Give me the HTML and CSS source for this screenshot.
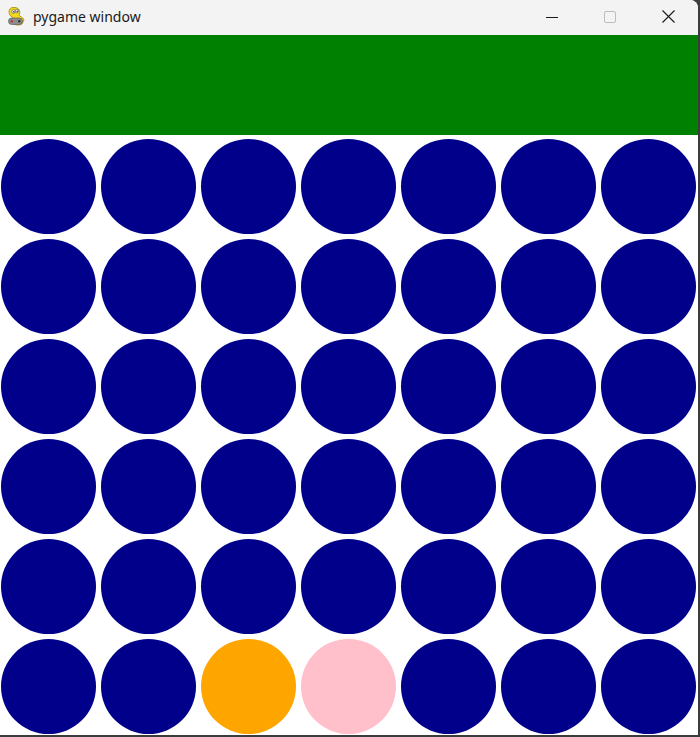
FILE: index.html
```html
<!DOCTYPE html>
<html lang="en">
<head>
  <meta charset="UTF-8">
  <title>pygame window</title>
  <link rel="stylesheet" href="styles.css">
</head>
<body>
  <div class="window">
    <!-- Barre de titre -->
    <div class="titlebar">
      <svg class="app-icon" width="20" height="24" viewBox="0 0 20 22">
        <path d="M6 1.5 C2 1.5 1 6 3 9 C4 11 6 11 7 13 L5 16 C6 19 12 20 15 18 L17 14 C16 11 13 11 12 9 C14 6 12 1.5 8 1.5 Z" fill="#f2d81e" stroke="#9a8a10" stroke-width="0.8"/>
        <circle cx="6.5" cy="5.5" r="1.8" fill="#fff" stroke="#333" stroke-width="0.5"/>
        <circle cx="10" cy="5" r="1.8" fill="#fff" stroke="#333" stroke-width="0.5"/>
        <circle cx="6.8" cy="5.7" r="0.7" fill="#111"/>
        <circle cx="10.2" cy="5.2" r="0.7" fill="#111"/>
        <rect x="1.5" y="12" width="14" height="6.5" rx="3.2" fill="#8c8c8c" stroke="#555" stroke-width="0.6"/>
        <circle cx="4.8" cy="15.2" r="1.2" fill="#c33"/>
        <circle cx="12.2" cy="15.2" r="1.2" fill="#333"/>
      </svg>
      <span class="title">pygame window</span>
      <div class="controls">
        <div class="ctrl">
          <svg width="12" height="12" viewBox="0 0 12 12"><path d="M0 6.5 H12" stroke="#1a1a1a" stroke-width="1"/></svg>
        </div>
        <div class="ctrl">
          <svg width="12" height="12" viewBox="0 0 12 12"><rect x="0.5" y="0.5" width="11" height="11" rx="1.5" fill="none" stroke="#bdbdbd" stroke-width="1"/></svg>
        </div>
        <div class="ctrl">
          <svg width="13" height="13" viewBox="0 0 13 13"><path d="M0.5 0.5 L12.5 12.5 M12.5 0.5 L0.5 12.5" stroke="#1a1a1a" stroke-width="1.1"/></svg>
        </div>
      </div>
    </div>

    <!-- Zone de jeu -->
    <div class="screen">
      <div class="top-bar"></div>
      <div class="board" id="board"></div>
    </div>
  </div>

  <script>
    const ROWS = 6;
    const COLS = 7;
    // jetons posés : "ligne,colonne" -> couleur
    const pieces = { "5,2": "orange", "5,3": "pink" };

    const board = document.getElementById("board");
    for (let r = 0; r < ROWS; r++) {
      for (let c = 0; c < COLS; c++) {
        const cell = document.createElement("div");
        cell.className = "cell";
        const disc = document.createElement("div");
        disc.className = "disc " + (pieces[r + "," + c] || "empty");
        cell.appendChild(disc);
        board.appendChild(cell);
      }
    }
  </script>
</body>
</html>
```

FILE: styles.css
```css
html, body {
  margin: 0;
  padding: 0;
}
body {
  background: #3c3c3c;
  width: 700px;
  height: 737px;
  overflow: hidden;
  font-family: "Noto Sans", "Open Sans", sans-serif;
}
.window {
  width: 698px;
  height: 735px;
  background: #ffffff;
  border-top-right-radius: 8px;
  overflow: hidden;
}
.titlebar {
  height: 35px;
  background: #f3f3f3;
  display: flex;
  align-items: center;
}
.app-icon {
  margin-left: 7px;
  margin-top: -2px;
}
.title {
  margin-left: 6px;
  font-size: 14px;
  color: #1a1a1a;
  margin-top: -3px;
}
.controls {
  margin-left: auto;
  display: flex;
  margin-right: 1px;
}
.ctrl {
  width: 58px;
  height: 35px;
  display: flex;
  align-items: center;
  justify-content: center;
  margin-top: -2px;
}
.top-bar {
  height: 100px;
  background: #008000;
}
.board {
  display: grid;
  grid-template-columns: repeat(7, 100px);
  grid-auto-rows: 100px;
  margin-left: -2px;
  padding-top: 1px;
}
.cell {
  display: flex;
  align-items: center;
  justify-content: center;
}
.disc {
  width: 95px;
  height: 95px;
  border-radius: 50%;
}
.disc.empty {
  background: #00008b;
}
.disc.orange {
  background: #ffa500;
}
.disc.pink {
  background: #ffc0cb;
}
```
